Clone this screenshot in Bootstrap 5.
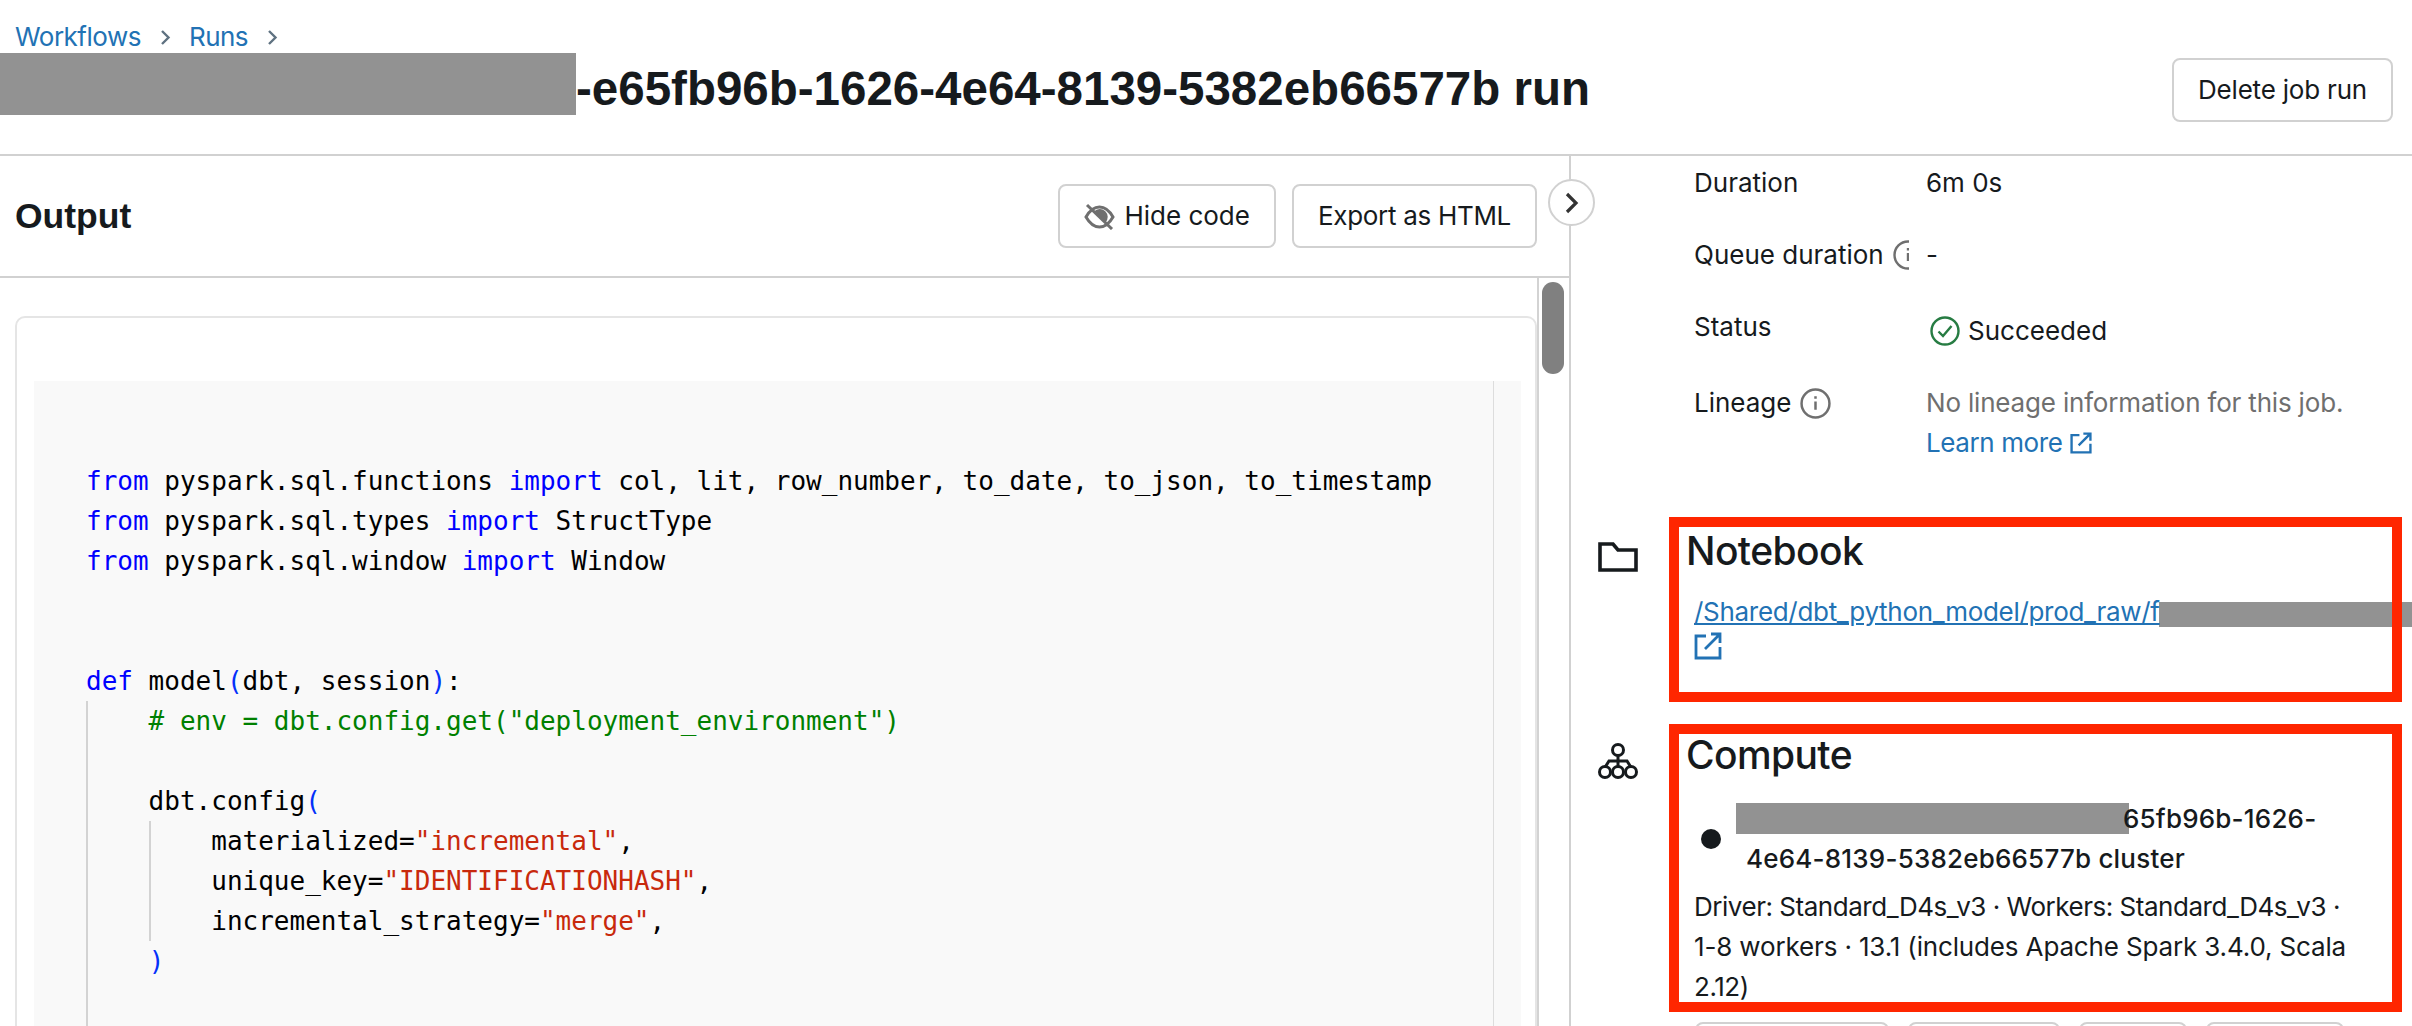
<!DOCTYPE html>
<html lang="en">
<head>
<meta charset="utf-8">
<title>Job run</title>
<link href="https://cdn.jsdelivr.net/npm/bootstrap@5.3.0/dist/css/bootstrap.min.css" rel="stylesheet">
<style>
html,body{height:1026px;overflow:hidden}
body{font-family:Inter,"Liberation Sans",sans-serif;font-size:26px;line-height:40px;color:#161a1d;background:#fff}
a{color:#2272b4}
.page-head{height:156px;border-bottom:2px solid #d1d1d1;padding-right:19px}
.crumbs{padding:21px 0 0 15px;height:53px;line-height:40px;letter-spacing:-.5px}
.crumbs a{text-decoration:none}
.crumb-sep{width:11px;height:15px;margin:0 18px 0 19px}
.title-row{height:62px;font-family:"Liberation Sans",Arial,sans-serif;font-weight:700;font-size:47.500px;line-height:72px;white-space:nowrap}
.redact{background:#929292;display:inline-block}
.redact-title{width:576px;height:62px;vertical-align:top}
.act-btn{border:2px solid #d1d1d1;border-radius:8px;background:#fff;color:#161a1d;font-size:26px;line-height:40px;height:64px;padding:0 24px;display:inline-flex;align-items:center;gap:9px}
.del-btn{margin-top:58px;letter-spacing:-.2px}
.exp-btn{letter-spacing:-.3px}
.body-wrap{height:870px;position:relative}
.left-pane{width:1571px;border-right:2px solid #d1d1d1}
.out-head{height:122px;border-bottom:2px solid #d1d1d1;padding:28px 32px 0 15px}
.out-title{font-family:"Liberation Sans",Arial,sans-serif;font-weight:700;font-size:35.500px;line-height:64px;margin:0}
.scroll-area{height:748px;overflow:hidden}
.out-card{width:1522px;margin:38px 0 0 15px;height:720px;border:2px solid #e5e5e5;border-radius:10px 10px 0 0;padding:63px 14px 0 17px}
.code-wrap{background:#f9f9f9;height:100%}
.code{font-family:"DejaVu Sans Mono",monospace;font-size:26px;line-height:40px;white-space:pre;color:#000;padding-left:52px;padding-top:80px;width:1460px;overflow:hidden}
.code-side{width:28px;border-left:1px solid #ddd}
.blank-ln{height:40px}
.gd{box-shadow:inset 2px 0 0 #d3d3d3}
.gd-in{margin-left:4ch}
.kw{color:#0000ff}.br{color:#0431fa}.cm{color:#008000}.st{color:#c8290c}
.sb-track{width:32px;border-left:2px solid #d3d3d3;padding:4px 0 0 3px;background:#fff}
.sb-thumb{width:22px;height:92px;background:#808080;border-radius:11px}
.toggle{position:absolute;left:1548px;top:23px;width:47px;height:47px;border:2px solid #d1d1d1;border-radius:50%;background:#fff}
.side{width:841px;overflow:hidden;position:relative}
.facts{padding:7px 0 0 123px}
.fact{display:flex;margin-bottom:32px}
.fact-l{width:215px;margin-right:17px;flex:none;overflow:hidden;white-space:nowrap;display:flex;align-items:center;gap:9px;height:40px}
.fact-status .fact-v{padding-top:4px}
.muted-v{color:#6f6f6f;letter-spacing:-.18px}
.learn-link{letter-spacing:-.4px}
.sec{display:flex;margin-left:27px}
.sec-nb{margin-top:54px}
.sec-cp{margin-top:22px}
.sec-ic{flex:none;margin-right:31px}
.sec-ic-a{margin-top:25px}
.sec-ic-b{margin-top:18px}
.red-box{border:10px solid #ff2600;width:733px;padding-left:7px;color:#161a1d;position:relative;z-index:1}
.red-nb{height:185px}
.red-cp{height:288px}
.sec-h{font-size:39px;line-height:48px;font-weight:500;margin:0;letter-spacing:-.6px}
.sec-h-cp{margin-top:-3px}
.nb-link{padding:17px 0 0 8px;white-space:nowrap;letter-spacing:-.3px}
.nb-ext{display:block}
.redact-link{position:absolute;left:588px;top:446px;width:260px;height:25px;z-index:0}
.cl-name{display:flex;align-items:center;padding:20px 0 0 15px}
.cl-dot{width:20px;height:20px;border-radius:50%;background:#161a1d;flex:none;margin:0 15px 0 0}
.cl-text{line-height:40px;font-weight:500;letter-spacing:.2px;text-indent:-10px;padding-left:10px}
.redact-cl{width:393px;height:31px;vertical-align:-6px;margin-right:-6px}
.cl-meta{padding:8px 10px 0 8px;letter-spacing:-.47px}
.meta-wide{letter-spacing:-.15px;white-space:nowrap}
.peek{padding:10px 0 0 124px;gap:19px}
.peek-btn{height:40px;border:2px solid #d1d1d1;border-radius:8px;flex:none}
</style>
</head>
<body>
<header class="page-head d-flex justify-content-between">
  <div>
    <nav class="crumbs d-flex align-items-center">
      <a href="#">Workflows</a>
      <svg class="crumb-sep" viewBox="0 0 11 15" fill="none" stroke="#5f7281" stroke-width="2.4"><path d="M2 1l6.500 6.500L2 14"/></svg>
      <a href="#">Runs</a>
      <svg class="crumb-sep" viewBox="0 0 11 15" fill="none" stroke="#5f7281" stroke-width="2.4"><path d="M2 1l6.500 6.500L2 14"/></svg>
    </nav>
    <h1 class="title-row m-0"><span class="redact redact-title"></span>-e65fb96b-1626-4e64-8139-5382eb66577b run</h1>
  </div>
  <div><button class="act-btn del-btn" type="button">Delete job run</button></div>
</header>
<div class="body-wrap d-flex">
  <main class="left-pane">
    <div class="out-head d-flex justify-content-between align-items-start">
      <h2 class="out-title">Output</h2>
      <div class="d-flex gap-3">
        <button class="act-btn" type="button">
          <svg width="31" height="27" viewBox="0 0 31 27" fill="none" stroke="#6f6f6f" stroke-width="3"><path d="M2 14C6 7 10 4 15.500 4S25 7 29 14c-4 7-8 10-13.500 10S6 21 2 14z"/><path d="M10 8.500a7 7 0 0 1 11.500 11z" fill="#6f6f6f" stroke="none"/><path d="M3 2l25 24"/></svg>
          Hide code</button>
        <button class="act-btn exp-btn" type="button">Export as HTML</button>
      </div>
    </div>
    <div class="scroll-area d-flex">
      <div class="out-card flex-shrink-0">
        <div class="code-wrap d-flex">
<div class="code flex-grow-1"><div><span class="kw">from</span> pyspark.sql.functions <span class="kw">import</span> col, lit, row_number, to_date, to_json, to_timestamp</div><div><span class="kw">from</span> pyspark.sql.types <span class="kw">import</span> StructType</div><div><span class="kw">from</span> pyspark.sql.window <span class="kw">import</span> Window</div><div class="blank-ln"></div><div class="blank-ln"></div><div><span class="kw">def</span> model<span class="br">(</span>dbt, session<span class="br">)</span>:</div><div class="gd"><div class="cm">    # env = dbt.config.get("deployment_environment")</div><div class="blank-ln"></div><div>    dbt.config<span class="br">(</span></div><div class="gd-in gd"><div>    materialized=<span class="st">"incremental"</span>,</div><div>    unique_key=<span class="st">"IDENTIFICATIONHASH"</span>,</div><div>    incremental_strategy=<span class="st">"merge"</span>,</div></div><div>    <span class="br">)</span></div><div class="blank-ln"></div><div class="blank-ln"></div></div></div>
          <div class="code-side"></div>
        </div>
      </div>
      <div class="sb-track"><div class="sb-thumb"></div></div>
    </div>
  </main>
  <button class="toggle p-0 d-flex align-items-center justify-content-center" type="button" aria-label="Collapse">
    <svg width="14" height="22" viewBox="0 0 14 22" fill="none" stroke="#333" stroke-width="3.200"><path d="M2 2l9 9-9 9"/></svg>
  </button>
  <aside class="side">
    <div class="facts">
      <div class="fact"><div class="fact-l">Duration</div><div>6m 0s</div></div>
      <div class="fact"><div class="fact-l">Queue duration
        <svg class="flex-shrink-0" width="30" height="30" viewBox="0 0 30 30" fill="none" stroke="#6f6f6f" stroke-width="2.400"><circle cx="15" cy="15" r="13.500"/><path d="M15 13v8M15 8v2.500"/></svg></div><div>-</div></div>
      <div class="fact fact-status"><div class="fact-l">Status</div><div class="fact-v d-flex align-items-center">
        <svg class="me-2 ms-1" width="30" height="30" viewBox="0 0 30 30" fill="none" stroke="#277c43" stroke-width="2.400"><circle cx="15" cy="15" r="13.500"/><path d="M8.500 15.500l4.500 4.500 8.500-10"/></svg>Succeeded</div></div>
      <div class="fact mb-0"><div class="fact-l">Lineage
        <svg class="flex-shrink-0" width="31" height="31" viewBox="0 0 30 30" fill="none" stroke="#6f6f6f" stroke-width="2.400"><circle cx="15" cy="15" r="13.500"/><path d="M15 13v8M15 8v2.500"/></svg></div>
        <div class="muted-v">No lineage information for this job.<br><a class="learn-link text-decoration-none d-inline-flex align-items-center gap-2" href="#">Learn more
          <svg width="22" height="22" viewBox="0 0 28 28" fill="none" stroke="#2272b4" stroke-width="3"><path d="M12 4H2v22h24V15"/><path d="M11 17L25 3M17 2h9v9"/></svg></a></div>
      </div>
    </div>
    <section class="sec sec-nb">
      <svg class="sec-ic sec-ic-a" width="40" height="30" viewBox="0 0 40 30" fill="none" stroke="#161a1d" stroke-width="3.600"><path d="M2 2h13l5 6h18v20H2z"/></svg>
      <div class="red-box red-nb">
        <h3 class="sec-h">Notebook</h3>
        <div class="nb-link"><a href="#">/Shared/dbt_python_model/prod_raw/f</a>
          <svg class="nb-ext" width="28" height="28" viewBox="0 0 28 28" fill="none" stroke="#2272b4" stroke-width="2.800"><path d="M12 4H2v22h24V15"/><path d="M11 17L25 3M17 2h9v9"/></svg></div>
      </div>
    </section>
    <div class="redact redact-link"></div>
    <section class="sec sec-cp">
      <svg class="sec-ic sec-ic-b" width="40" height="40" viewBox="0 0 40 40" fill="none" stroke="#161a1d" stroke-width="3"><circle cx="20" cy="8" r="5.500"/><circle cx="7" cy="30" r="5.500"/><circle cx="20" cy="30" r="5.500"/><circle cx="33" cy="30" r="5.500"/><path d="M20 13.500v11M7.500 24.500L11 19h18l3.500 5.500"/></svg>
      <div class="red-box red-cp">
        <h3 class="sec-h sec-h-cp">Compute</h3>
        <div class="cl-name"><span class="cl-dot"></span><div class="cl-text"><span class="redact redact-cl"></span>65fb96b-1626-<br>4e64-8139-5382eb66577b cluster</div></div>
        <div class="cl-meta">Driver: Standard_D4s_v3 · Workers: Standard_D4s_v3 ·<br><span class="meta-wide">1-8 workers · 13.1 (includes Apache Spark 3.4.0, Scala</span><br>2.12)</div>
      </div>
    </section>
    <div class="peek d-flex">
      <span class="peek-btn" style="width:194px"></span><span class="peek-btn" style="width:152px"></span><span class="peek-btn" style="width:108px"></span><span class="peek-btn" style="width:138px"></span>
    </div>
  </aside>
</div>
<script src="https://cdn.jsdelivr.net/npm/bootstrap@5.3.0/dist/js/bootstrap.bundle.min.js"></script>
</body>
</html>
